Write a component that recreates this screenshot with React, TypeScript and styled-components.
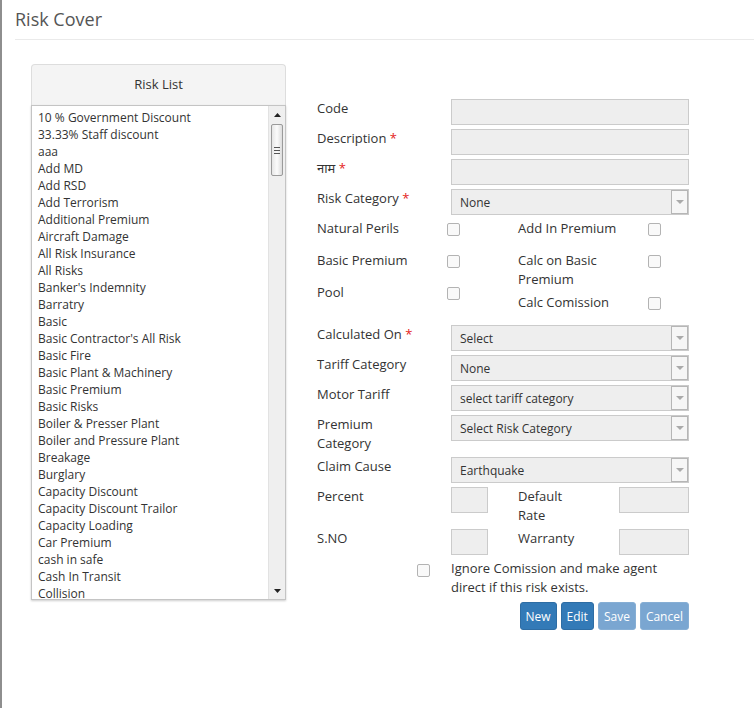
import React from 'react'
import styled, { createGlobalStyle } from 'styled-components'

const GlobalStyle = createGlobalStyle`
  html, body {
    margin: 0;
    padding: 0;
    background: #fff;
  }
  body {
    font-family: "Open Sans", "Noto Sans", "Noto Sans Devanagari", "DejaVu Sans", sans-serif;
    color: #333;
  }
`

const risks = [
  '10 % Government Discount',
  '33.33% Staff discount',
  'aaa',
  'Add MD',
  'Add RSD',
  'Add Terrorism',
  'Additional Premium',
  'Aircraft Damage',
  'All Risk Insurance',
  'All Risks',
  "Banker's Indemnity",
  'Barratry',
  'Basic',
  "Basic Contractor's All Risk",
  'Basic Fire',
  'Basic Plant & Machinery',
  'Basic Premium',
  'Basic Risks',
  'Boiler & Presser Plant',
  'Boiler and Pressure Plant',
  'Breakage',
  'Burglary',
  'Capacity Discount',
  'Capacity Discount Trailor',
  'Capacity Loading',
  'Car Premium',
  'cash in safe',
  'Cash In Transit',
  'Collision',
]

//page frame
const Page = styled.div`
  min-height: 708px;
  border-left: 2px solid #8e8e8e;
  box-sizing: border-box;
`

const Header = styled.div`
  margin-left: 13px;
  padding: 7px 0 8px;
  border-bottom: 1px solid #eaeaea;
`

const Title = styled.h1`
  margin: 0;
  font-size: 18px;
  line-height: 24px;
  font-weight: 400;
  color: #555;
`

const Body = styled.div`
  display: flex;
  align-items: flex-start;
  padding: 24px 0 0 29px;
`

//left side list
const Panel = styled.div`
  width: 255px;
  flex-shrink: 0;
`

const PanelHead = styled.div`
  height: 38px;
  padding-bottom: 2px;
  display: flex;
  align-items: center;
  justify-content: center;
  background: #f4f4f4;
  border: 1px solid #ddd;
  border-bottom: none;
  border-radius: 4px 4px 0 0;
  font-size: 13px;
`

const ListBox = styled.div`
  display: flex;
  height: 495px;
  border: 1px solid #c4c4c4;
  box-shadow: 0 1px 2px rgba(0, 0, 0, 0.2);
  box-sizing: border-box;
  background: #fff;
`

const ListItems = styled.div`
  flex: 1;
  overflow: hidden;
  padding: 3px 0 0 6px;
`

const ListItem = styled.div`
  font-size: 12px;
  line-height: 17px;
  white-space: nowrap;
`

const ScrollBar = styled.div`
  width: 16px;
  display: flex;
  flex-direction: column;
  align-items: center;
  background: #efefef;
  border-left: 1px solid #e2e2e2;
`

const ScrollArrow = styled.div<{ $down?: boolean }>`
  height: 17px;
  width: 100%;
  display: flex;
  align-items: center;
  justify-content: center;
  margin-top: ${(p) => (p.$down ? 'auto' : '0')};
`

const Thumb = styled.div`
  width: 12px;
  height: 52px;
  margin-top: 1px;
  border: 1px solid #9a9a9a;
  border-radius: 2px;
  box-sizing: border-box;
  background: linear-gradient(to right, #e6e6e6, #fbfbfb 50%, #dcdcdc);
  display: flex;
  align-items: center;
  justify-content: center;
`

//right side form
const Form = styled.div`
  margin-left: 31px;
  padding-top: 35px;
  width: 372px;
  display: flex;
  flex-direction: column;
  gap: 4px;
`

const Row = styled.div`
  display: flex;
  align-items: flex-start;
`

const Label = styled.div<{ $w?: number }>`
  width: ${(p) => p.$w ?? 134}px;
  flex-shrink: 0;
  font-size: 13px;
  line-height: 19px;
`

const Req = styled.span`
  color: #e4231b;
`

const Input = styled.div<{ $w?: number }>`
  width: ${(p) => p.$w ?? 238}px;
  height: 26px;
  box-sizing: border-box;
  background: #eee;
  border: 1px solid #cbcbcb;
  flex-shrink: 0;
`

const Select = styled.div`
  width: 238px;
  height: 26px;
  box-sizing: border-box;
  background: #eee;
  border: 1px solid #cbcbcb;
  display: flex;
  align-items: center;
  justify-content: space-between;
  padding-left: 8px;
  font-size: 12px;
`

const SelectArrow = styled.div`
  width: 17px;
  height: 24px;
  box-sizing: border-box;
  border: 1px solid #b6b6b6;
  background: #f6f6f6;
  display: flex;
  align-items: center;
  justify-content: center;
`

const Caret = styled.div`
  width: 0;
  height: 0;
  border-left: 4px solid transparent;
  border-right: 4px solid transparent;
  border-top: 4px solid #aaa;
`

const CheckCols = styled.div`
  display: flex;
`

const CheckCol = styled.div<{ $w: number }>`
  width: ${(p) => p.$w}px;
  display: flex;
  flex-direction: column;
  gap: 4px;
`

const CheckRow = styled.div`
  display: flex;
  align-items: flex-start;
  min-height: 28px;
`

const Box = styled.span`
  display: inline-block;
  width: 13px;
  height: 13px;
  margin-top: 4px;
  margin-left: -1px;
  box-sizing: border-box;
  border: 1px solid #b3b3b3;
  border-radius: 2px;
  background: #f9f9f9;
  flex-shrink: 0;
`

const Gap = styled.div<{ $w: number }>`
  width: ${(p) => p.$w}px;
  flex-shrink: 0;
`

const NoteRow = styled.div`
  display: flex;
  align-items: flex-start;
  margin-left: 101px;
`

const Note = styled.div`
  margin-left: 21px;
  font-size: 13px;
  line-height: 19px;
`

const Buttons = styled.div`
  display: flex;
  justify-content: flex-end;
  gap: 4px;
  margin-top: 1px;
`

const Button = styled.button<{ $off?: boolean }>`
  height: 28px;
  padding: 0 5px;
  border: 1px solid ${(p) => (p.$off ? '#86aed4' : '#2e6da4')};
  border-radius: 3px;
  background: ${(p) => (p.$off ? '#7aa6d1' : '#337ab7')};
  color: #fff;
  font-family: inherit;
  font-size: 12px;
  cursor: ${(p) => (p.$off ? 'not-allowed' : 'pointer')};
`

function Dropdown({ value }: { value: string }) {
  return (
    <Select>
      <span>{value}</span>
      <SelectArrow>
        <Caret />
      </SelectArrow>
    </Select>
  )
}

function Check({ label, w }: { label: React.ReactNode; w: number }) {
  return (
    <CheckRow>
      <Label $w={w}>{label}</Label>
      <Box />
    </CheckRow>
  )
}

export default function App() {
  return (
    <>
      <GlobalStyle />
      <Page>
        <Header>
          <Title>Risk Cover</Title>
        </Header>

        <Body>
          {/* Risk list */}
          <Panel>
            <PanelHead>Risk List</PanelHead>
            <ListBox>
              <ListItems>
                {risks.map((r) => (
                  <ListItem key={r}>{r}</ListItem>
                ))}
              </ListItems>
              <ScrollBar>
                <ScrollArrow>
                  <svg width="7" height="4" viewBox="0 0 7 4">
                    <path d="M0 4 L3.5 0 L7 4 Z" fill="#222" />
                  </svg>
                </ScrollArrow>
                <Thumb>
                  <svg width="6" height="7" viewBox="0 0 6 7">
                    <path d="M0 .5h6M0 3.5h6M0 6.5h6" stroke="#555" strokeWidth="1" />
                  </svg>
                </Thumb>
                <ScrollArrow $down>
                  <svg width="7" height="4" viewBox="0 0 7 4">
                    <path d="M0 0 L3.5 4 L7 0 Z" fill="#222" />
                  </svg>
                </ScrollArrow>
              </ScrollBar>
            </ListBox>
          </Panel>

          {/* Form */}
          <Form>
            <Row>
              <Label>Code</Label>
              <Input />
            </Row>
            <Row>
              <Label>
                Description <Req>*</Req>
              </Label>
              <Input />
            </Row>
            <Row>
              <Label>
                नाम <Req>*</Req>
              </Label>
              <Input />
            </Row>
            <Row>
              <Label>
                Risk Category <Req>*</Req>
              </Label>
              <Dropdown value="None" />
            </Row>

            <CheckCols>
              <CheckCol $w={201}>
                <Check w={131} label="Natural Perils" />
                <Check w={131} label="Basic Premium" />
                <Check w={131} label="Pool" />
              </CheckCol>
              <CheckCol $w={171}>
                <Check w={131} label="Add In Premium" />
                <Check
                  w={131}
                  label={
                    <>
                      Calc on Basic
                      <br />
                      Premium
                    </>
                  }
                />
                <Check w={131} label="Calc Comission" />
              </CheckCol>
            </CheckCols>

            <Row>
              <Label>
                Calculated On <Req>*</Req>
              </Label>
              <Dropdown value="Select" />
            </Row>
            <Row>
              <Label>Tariff Category</Label>
              <Dropdown value="None" />
            </Row>
            <Row>
              <Label>Motor Tariff</Label>
              <Dropdown value="select tariff category" />
            </Row>
            <Row>
              <Label>
                Premium
                <br />
                Category
              </Label>
              <Dropdown value="Select Risk Category" />
            </Row>
            <Row>
              <Label>Claim Cause</Label>
              <Dropdown value="Earthquake" />
            </Row>
            <Row>
              <Label>Percent</Label>
              <Input $w={37} />
              <Gap $w={30} />
              <Label $w={101}>
                Default
                <br />
                Rate
              </Label>
              <Input $w={70} />
            </Row>
            <Row>
              <Label>S.NO</Label>
              <Input $w={37} />
              <Gap $w={30} />
              <Label $w={101}>Warranty</Label>
              <Input $w={70} />
            </Row>

            <NoteRow>
              <Box style={{ marginTop: 5 }} />
              <Note>
                Ignore Comission and make agent
                <br />
                direct if this risk exists.
              </Note>
            </NoteRow>

            <Buttons>
              <Button>New</Button>
              <Button>Edit</Button>
              <Button $off>Save</Button>
              <Button $off>Cancel</Button>
            </Buttons>
          </Form>
        </Body>
      </Page>
    </>
  )
}
